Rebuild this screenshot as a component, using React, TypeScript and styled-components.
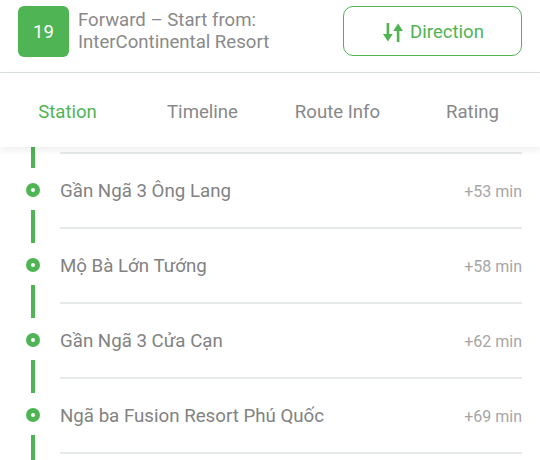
import React from "react";
import styled, { createGlobalStyle } from "styled-components";

const GREEN = "#4fb453";

const Global = createGlobalStyle`
  html, body { margin: 0; padding: 0; background: #fff; }
  body { font-family: Roboto, "Noto Sans", "Liberation Sans", sans-serif; }
  * { box-sizing: border-box; }
`;

const Page = styled.div`
  width: 540px;
  height: 460px;
  display: flex;
  flex-direction: column;
  overflow: hidden;
  background: #fff;
`;

const Header = styled.header`
  height: 73px;
  flex: none;
  display: flex;
  align-items: flex-start;
  padding: 6px 18px 0 18px;
  border-bottom: 1px solid #dadfe2;
`;

const Badge = styled.div`
  width: 51px;
  height: 51px;
  flex: none;
  border-radius: 6px;
  background: ${GREEN};
  color: #fff;
  font-size: 18.5px;
  display: flex;
  align-items: center;
  justify-content: center;
`;

const Title = styled.div`
  flex: 1;
  margin-left: 9px;
  padding-top: 4px;
  color: #8a8a8a;
  font-size: 18.6px;
  line-height: 21.5px;
`;

const DirectionButton = styled.button`
  width: 179px;
  height: 50px;
  flex: none;
  border: 1.5px solid ${GREEN};
  border-radius: 10px;
  background: #fff;
  color: ${GREEN};
  font-family: inherit;
  font-size: 18.6px;
  display: flex;
  align-items: center;
  justify-content: center;
  gap: 7px;
  padding: 2px 0 0 2px;
`;

const Tabs = styled.nav`
  height: 74px;
  flex: none;
  display: grid;
  grid-template-columns: repeat(4, 1fr);
  position: relative;
  z-index: 2;
  background: #fff;
  box-shadow: 0 3px 7px rgba(0, 0, 0, 0.07);
`;

const Tab = styled.div<{ $active?: boolean }>`
  display: flex;
  align-items: center;
  justify-content: center;
  font-size: 18.6px;
  padding-top: 4px;
  white-space: nowrap;
  color: ${(p) => (p.$active ? GREEN : "#888")};
`;

const Viewport = styled.div`
  flex: 1;
  overflow: hidden;
  position: relative;
  z-index: 1;
`;

const List = styled.div`
  margin-top: -70px;
  display: flex;
  flex-direction: column;
`;

const Row = styled.div`
  height: 75px;
  display: flex;
`;

const Rail = styled.div`
  width: 60px;
  flex: none;
  display: flex;
  flex-direction: column;
  align-items: center;
  padding-left: 6px;
`;

const Segment = styled.div<{ $h: number }>`
  width: 4px;
  height: ${(p) => p.$h}px;
  background: ${GREEN};
  flex: none;
`;

const Dot = styled.div`
  width: 14px;
  height: 14px;
  margin: 15px 0 13px;
  flex: none;
  border-radius: 50%;
  background: ${GREEN};
  display: flex;
  align-items: center;
  justify-content: center;
  &::after {
    content: "";
    width: 4px;
    height: 4px;
    border-radius: 50%;
    background: #fff;
  }
`;

const Body = styled.div`
  flex: 1;
  margin-right: 18px;
  border-top: 2px solid #e6e9ea;
  display: flex;
  align-items: center;
  justify-content: space-between;
  padding-top: 1px;
`;

const Name = styled.span`
  font-size: 18.7px;
  color: #828282;
`;

const Time = styled.span`
  font-size: 16px;
  color: #a6a6a6;
`;

const SwapIcon = () => (
  <svg width="20" height="19" viewBox="0 0 20 19" fill={GREEN}>
    <rect x="3.6" y="0" width="2.6" height="13" />
    <polygon points="0,11 9.8,11 4.9,18.5" />
    <rect x="13.8" y="6" width="2.6" height="13" />
    <polygon points="10.2,8 20,8 15.1,0.5" />
  </svg>
);

const stations = [
  { name: "Ngã 3 Dương Đông", time: "+48 min" },
  { name: "Gần Ngã 3 Ông Lang", time: "+53 min" },
  { name: "Mộ Bà Lớn Tướng", time: "+58 min" },
  { name: "Gần Ngã 3 Cửa Cạn", time: "+62 min" },
  { name: "Ngã ba Fusion Resort Phú Quốc", time: "+69 min" },
  { name: "Bãi Dài", time: "+75 min" },
];

export default function App() {
  return (
    <>
      <Global />
      <Page>
        <Header>
          <Badge>19</Badge>
          <Title>
            Forward – Start from:
            <br />
            InterContinental Resort
          </Title>
          <DirectionButton>
            <SwapIcon />
            Direction
          </DirectionButton>
        </Header>
        <Tabs>
          <Tab $active>Station</Tab>
          <Tab>Timeline</Tab>
          <Tab>Route Info</Tab>
          <Tab>Rating</Tab>
        </Tabs>
        <Viewport>
          <List>
            {stations.map((s) => (
              <Row key={s.name}>
                <Rail>
                  <Segment $h={16} />
                  <Dot />
                  <Segment $h={17} />
                </Rail>
                <Body>
                  <Name>{s.name}</Name>
                  <Time>{s.time}</Time>
                </Body>
              </Row>
            ))}
          </List>
        </Viewport>
      </Page>
    </>
  );
}
